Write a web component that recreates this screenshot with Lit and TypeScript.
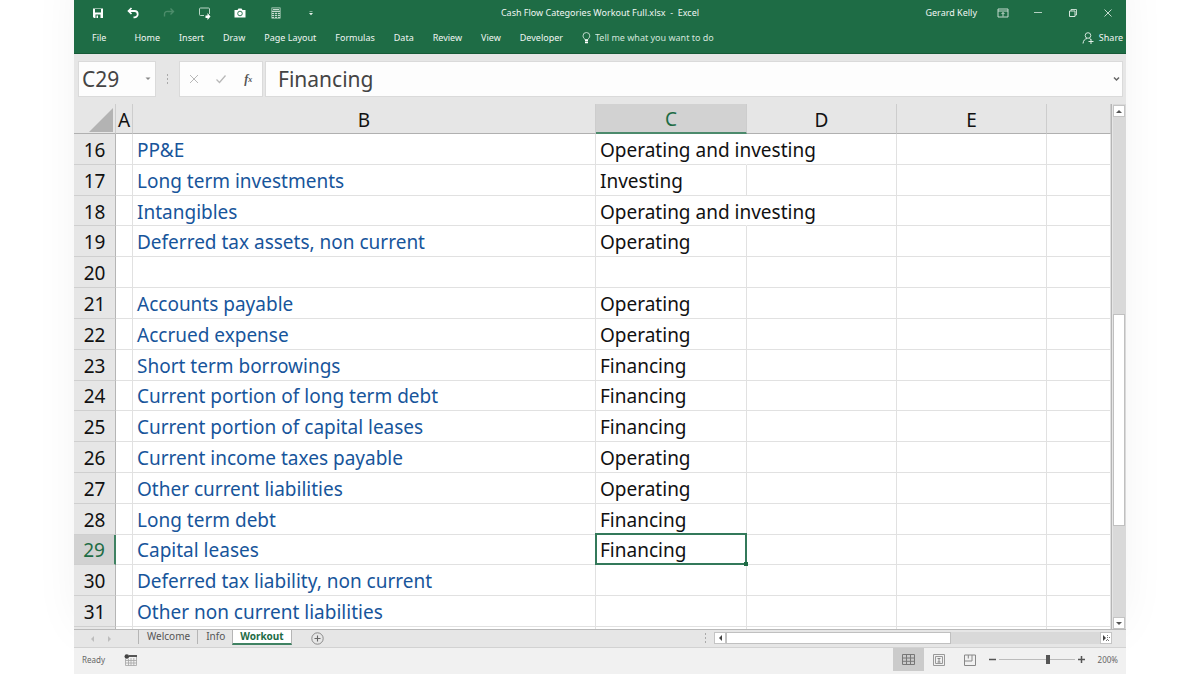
import { LitElement, html, svg, css, nothing } from "lit";
import { customElement, state } from "lit/decorators.js";
import { classMap } from "lit/directives/class-map.js";

interface Row {
  n: number;
  label: string;
  category: string;
}

const ROWS: Row[] = [
  { n: 16, label: "PP&E", category: "Operating and investing" },
  { n: 17, label: "Long term investments", category: "Investing" },
  { n: 18, label: "Intangibles", category: "Operating and investing" },
  { n: 19, label: "Deferred tax assets, non current", category: "Operating" },
  { n: 20, label: "", category: "" },
  { n: 21, label: "Accounts payable", category: "Operating" },
  { n: 22, label: "Accrued expense", category: "Operating" },
  { n: 23, label: "Short term borrowings", category: "Financing" },
  { n: 24, label: "Current portion of long term debt", category: "Financing" },
  { n: 25, label: "Current portion of capital leases", category: "Financing" },
  { n: 26, label: "Current income taxes payable", category: "Operating" },
  { n: 27, label: "Other current liabilities", category: "Operating" },
  { n: 28, label: "Long term debt", category: "Financing" },
  { n: 29, label: "Capital leases", category: "Financing" },
  { n: 30, label: "Deferred tax liability, non current", category: "" },
  { n: 31, label: "Other non current liabilities", category: "" },
];

const COLUMNS = ["A", "B", "C", "D", "E", ""];

const MENU = ["File", "Home", "Insert", "Draw", "Page Layout", "Formulas", "Data", "Review", "View", "Developer"];

const icon = (body: unknown, w = 12, h = 12) =>
  html`<svg width=${w} height=${h} viewBox="0 0 ${w} ${h}" fill="none" aria-hidden="true">${body}</svg>`;

const ICONS = {
  save: icon(svg`<path d="M1 1.5h10v9.500H2L1 10z" fill="#fff"/><path d="M3 2h6v3.500H3z" fill="#1e6c45"/><path d="M3.500 7.500h5V11h-5z" fill="#1e6c45"/><path d="M4.500 8.500h1.500V11H4.500z" fill="#fff"/>`),
  undo: icon(svg`<path d="M4.500 1L1.500 4l3 3" stroke="#fff" stroke-width="1.700"/><path d="M2 4h5.500a3.200 3.200 0 0 1 0 6.400H6.500" stroke="#fff" stroke-width="1.800"/>`),
  redo: icon(svg`<path d="M7.500 1.500L10.500 4.500l-3 3M10.500 4.500H5a2.800 2.800 0 0 0-3.500 3v2" stroke="#4c8c6a" stroke-width="1.400"/>`),
  touch: icon(svg`<path d="M6 8.500H2.500a1 1 0 0 1-1-1V2a1 1 0 0 1 1-1h8a1 1 0 0 1 1 1v5" stroke="#b9d6c6"/><path d="M7.500 8.500h2V6l3 3.500-3 3.500v-2h-2z" fill="#fff"/>`, 13, 13),
  camera: icon(svg`<path d="M.500 3h3l1-1.500h3L8.500 3h3v7.500H.500z" fill="#fff"/><circle cx="6" cy="6.500" r="2.300" stroke="#1e6c45" stroke-width=".9"/>`),
  calc: icon(svg`<path d="M1.500.500h9v11h-9z" fill="#c5dccf"/><path d="M2.500 1.500h7v2h-7z" stroke="#1e6c45" stroke-width=".7"/><path d="M2 5.500h8M2 7.500h8M2 9.500h8M4.500 5v6M7.500 5v6" stroke="#1e6c45" stroke-width=".8"/>`),
  more: icon(svg`<path d="M4.500 4.500h3" stroke="#a9cbb9" stroke-width=".7"/><path d="M4 6h4L6 8.200z" fill="#e6f0ea"/>`),
  display: icon(svg`<path d="M1 2h10v8H1zM1 4h10M6 9.500v-4M4.500 7L6 5.500 7.500 7" stroke="#d6e6dd" stroke-width=".9"/>`),
  minimise: icon(svg`<path d="M2 5.500h8" stroke="#b5d0c2"/>`),
  restore: icon(svg`<path d="M2.500 4h5.500v5.500H2.500z" stroke="#d6e6dd"/><path d="M4 4V2.500h5.500V8H8" stroke="#d6e6dd" stroke-width=".9"/>`),
  close: icon(svg`<path d="M2.500 2.500l7 7M9.500 2.500l-7 7" stroke="#d6e6dd" stroke-width=".9"/>`),
  bulb: icon(svg`<path d="M2.800 7.500C2.500 6.300 1 5.700 1 3.900a3.400 3.400 0 0 1 6.800 0c0 1.800-1.500 2.400-1.800 3.600z" stroke="#cfe2d8" stroke-width=".9"/><path d="M3 8.500h3M3 10.500h3" stroke="#fff" stroke-width="1.500"/>`, 9, 12),
  share: icon(svg`<circle cx="6" cy="3.500" r="2.800" stroke="#e3efe9" stroke-width=".9"/><path d="M1 11.500C1.300 8.500 3 6.800 5 6.500M7.500 6.500l1.500 1M6.500 9.500h5M9 7v5" stroke="#e3efe9"/>`, 12, 13),
  cancel: icon(svg`<path d="M2 2l8 8M10 2l-8 8" stroke="#b8b8b8"/>`),
  accept: icon(svg`<path d="M1.500 6.500l3 3 6-7" stroke="#b8b8b8" stroke-width="1.300"/>`),
  caret: icon(svg`<path d="M.500 1.500h5L3 4z" fill="#888"/>`, 6, 6),
  chevron: icon(svg`<path d="M1 1.500l2.500 2.500L6 1.500" stroke="#666" stroke-width="1.500"/>`, 7, 6),
  up: icon(svg`<path d="M0 4h6L3 1z" fill="#555"/>`, 6, 5),
  down: icon(svg`<path d="M0 1h6L3 4z" fill="#555"/>`, 6, 5),
  left: icon(svg`<path d="M4 0v6L1 3z" fill="#444"/>`, 5, 6),
  right: icon(svg`<path d="M1 0v6l3-3z" fill="#444"/><path d="M5.500 0v6M4 5.500h4M7.500 2v2" stroke="#777" stroke-dasharray="1 1"/>`, 8, 6),
  prev: icon(svg`<path d="M4 0v6L1 3z" fill="#bdbdbd"/>`, 5, 6),
  next: icon(svg`<path d="M1 0v6l3-3z" fill="#bdbdbd"/>`, 5, 6),
  add: icon(svg`<circle cx="6.500" cy="6.500" r="5.700" stroke="#808080" stroke-width=".9"/><path d="M3.500 6.500h6M6.500 3.500v6" stroke="#666" stroke-width="1.100"/>`, 13, 13),
  macro: icon(svg`<circle cx="2.800" cy="2.500" r="2.300" fill="#444"/><path d="M5 2h8" stroke="#555" stroke-width="2"/><path d="M1.500 5v6.500h11V3M1.500 6.500h11M1.500 9h11M4.500 5v6.500M7 4v7.500M9.800 4v7.500" stroke="#a5a5a5" stroke-width=".8"/>`, 13, 12),
  normal: icon(svg`<path d="M.500 1.500h12v10H.500zM.500 5h12M.500 8.300h12M4.500 1.500v10M8.500 1.500v10" stroke="#777"/>`, 13, 13),
  pageLayout: icon(svg`<path d="M.500.500h11v11H.500zM2.500 2.500h7v7h-7z" stroke="#999"/><path d="M4.500 4.500h3M6 4.500v4M4.500 8h3" stroke="#888"/>`),
  pageBreak: icon(svg`<path d="M.500 1h11v10.500H.500zM.500 7h7.500V1M4.300 1v3.500" stroke="#888"/>`),
  minus: icon(svg`<path d="M0 3.500h7" stroke="#555" stroke-width="1.500"/>`, 7, 7),
  plus: icon(svg`<path d="M0 3.500h7M3.500 0v7" stroke="#555" stroke-width="1.500"/>`, 7, 7),
};

@customElement("app-root")
export class AppRoot extends LitElement {
  @state() private selected = 29;
  @state() private sheet = "Workout";

  static styles = css`
    :host {
      display: block;
      box-sizing: border-box;
      height: 100vh;
      padding: 0 74px 1px;
      overflow: hidden;
      background: #fff;
      font-family: "Noto Sans", "Open Sans", sans-serif;
      --green: #1e6c45;
      --chrome: #e6e6e6;
      --line: #e1e1e1;
    }
    * { box-sizing: border-box; }
    button, input {
      font: inherit;
      color: inherit;
      background: none;
      border: 0;
      padding: 0;
      margin: 0;
      min-width: 0;
      outline: none;
    }
    button {
      display: flex;
      align-items: center;
      justify-content: center;
      white-space: nowrap;
    }
    svg { display: block; flex: none; }

    .window {
      display: flex;
      flex-direction: column;
      height: 100%;
      background: var(--chrome);
      box-shadow: 0 -40px 50px -10px rgba(0, 0, 0, 0.07);
    }
    .top {
      flex: none;
      background: var(--green);
      border-bottom: 1px solid #165a37;
      color: #f0f6f3;
      font-size: 9px;
      line-height: 12px;
    }
    .titlebar {
      display: grid;
      grid-template-columns: 1fr auto 1fr;
      align-items: center;
      height: 26px;
    }
    .title { white-space: pre; }
    .quick { display: flex; width: 249px; margin-left: 6px; }
    .quick button, .controls button { flex: 1; height: 24px; }
    .account { display: flex; align-items: center; justify-content: flex-end; gap: 8px; }
    .controls { display: flex; width: 141px; }
    .ribbon {
      display: flex;
      align-items: center;
      gap: 19px;
      height: 27px;
      padding: 0 3px 3px 18px;
    }
    .ribbon .file { margin-right: 9px; }
    .tell { display: flex; align-items: center; gap: 4px; flex: 1; color: #d3e4db; }
    .tell input { flex: 1; }
    .tell input::placeholder { color: #d3e4db; opacity: 1; }
    .share { gap: 5px; }

    .formula {
      flex: none;
      display: flex;
      align-items: stretch;
      height: 50px;
      padding: 7px 3px;
      color: #444;
      font-size: 21px;
      line-height: 28px;
    }
    .box { display: flex; align-items: center; background: #fdfdfd; border: 1px solid #dadada; }
    .namebox { width: 78px; margin-left: 1px; padding: 0 4px 0 3px; }
    .namebox input { flex: 1; }
    .grip { display: flex; align-items: center; justify-content: center; width: 23px; }
    .actions { width: 84px; }
    .actions button { flex: 1; height: 100%; }
    .fx { font: italic bold 12px "Liberation Serif", serif; color: #555; }
    .fx small { font-size: 8px; }
    .entry { flex: 1; margin-left: 2px; padding: 0 2px 0 12px; }
    .entry input { flex: 1; }

    .body { flex: 1; display: flex; min-height: 0; }
    .sheet { flex: 1; min-width: 0; overflow: hidden; border-right: 1px solid #b5b5b5; margin-right: 1px; }
    table {
      width: 100%;
      height: 100%;
      table-layout: fixed;
      border-collapse: separate;
      border-spacing: 0;
      font-size: 19px;
      line-height: 24px;
      color: #111;
    }
    th, td {
      padding: 2px 0 0;
      font-weight: 400;
      white-space: nowrap;
      border-right: 1px solid var(--line);
      border-bottom: 1px solid var(--line);
    }
    td { background: #fff; padding-left: 4px; text-align: left; }
    td.spill { border-right-color: transparent; overflow: visible; position: relative; z-index: 1; }
    td.label { color: #17559b; }
    thead tr { height: 30px; }
    thead th {
      background: var(--chrome);
      border-right-color: #cdcdcd;
      border-bottom-color: #b0b0b0;
    }
    thead th.current { background: #d2d2d2; color: var(--green); border-bottom: 2px solid #4c8a6c; }
    tbody th { background: var(--chrome); border-right-color: #b5b5b5; border-bottom-color: #cfcfcf; }
    tbody th.current { background: #d2d2d2; color: var(--green); border-right: 2px solid #3f8262; }
    .rownum { width: 42px; }
    .a { width: 17px; }
    .b { width: 463px; }
    .c { width: 151px; }
    .d, .e { width: 150px; }
    .corner { vertical-align: bottom; }
    .corner svg { margin: 0 2px 1px auto; }
    tr.rest { height: 2px; line-height: 0; }
    tr.rest th, tr.rest td { border-bottom: 0; }
    td.selected { position: relative; }
    td.selected::before {
      content: "";
      position: absolute;
      inset: -2px -1px -1px -1px;
      border: 2px solid #33795a;
    }
    td.selected::after {
      content: "";
      position: absolute;
      right: -2px;
      bottom: -2px;
      width: 4px;
      height: 4px;
      background: var(--green);
    }

    .vscroll { flex: none; display: flex; flex-direction: column; width: 13px; background: #d9d9d9; padding-top: 1px; }
    .arrow { flex: none; background: #fff; border: 1px solid #c4c4c4; width: 12px; height: 12px; }
    .thumb { background: #fff; border: 1px solid #c0c0c0; }
    .vscroll .before { flex: 199; }
    .vscroll .thumb { flex: 211; width: 12px; }
    .vscroll .after { flex: 92; }

    .tabs {
      flex: none;
      display: flex;
      height: 18px;
      border-top: 1px solid #b9b9b9;
      font-size: 10px;
      line-height: 12px;
      color: #555;
    }
    .nav { display: flex; gap: 6px; padding-left: 13px; width: 64px; }
    .nav button { width: 11px; }
    .tab { height: 14px; padding: 0 7px 2px 8px; border-left: 1px solid #b5b5b5; }
    .tab.active {
      background: #fff;
      color: var(--green);
      font-weight: 700;
      height: 15px;
      padding: 0 7px 1px;
      border-right: 1px solid #b5b5b5;
      border-bottom: 2px solid #3f8262;
    }
    .new { margin-left: 19px; }
    .hscroll { margin-left: auto; display: flex; align-items: center; width: 429px; padding: 0 14px 1px 0; }
    .hscroll .grip { width: 17px; }
    .track { flex: 1; display: flex; align-items: center; height: 12px; background: #d9d9d9; }
    .hscroll .thumb { flex: 224; height: 12px; }
    .hscroll .after { flex: 150; }

    .status {
      flex: none;
      display: flex;
      align-items: center;
      height: 27px;
      padding: 0 8px 3px;
      background: #f1f1f1;
      border-top: 1px solid #d2d2d2;
      font-size: 8px;
      line-height: 12px;
      color: #666;
    }
    .macro { margin-left: 19px; }
    .views { display: flex; margin-left: auto; align-self: stretch; }
    .views button { width: 31px; height: 23px; }
    .views .active { background: #cbcbcb; }
    .zoom { display: flex; align-items: center; gap: 3px; margin-left: 3px; }
    .zoom output { margin-left: 10px; }
    input[type="range"] { appearance: none; width: 76px; height: 12px; background: linear-gradient(#bcbcbc, #bcbcbc) center / 100% 1px no-repeat; }
    input[type="range"]::-webkit-slider-thumb { appearance: none; width: 4px; height: 9px; background: #555; }
  `;

  private renderRow(row: Row) {
    const current = row.n === this.selected;
    return html`<tr>
      <th scope="row" class=${classMap({ current })}>${row.n}</th>
      <td></td>
      <td class="label">${row.label}</td>
      <td
        class=${classMap({ selected: current, spill: row.category.length > 12 })}
        @click=${() => (this.selected = row.n)}
      >${row.category}</td>
      <td></td><td></td><td></td>
    </tr>`;
  }

  private renderTab(name: string) {
    return html`<button
      class=${classMap({ tab: true, active: this.sheet === name })}
      @click=${() => (this.sheet = name)}
    >${name}</button>`;
  }

  private grip() {
    return html`<span class="grip">${icon(svg`<path d="M1.500 1v2M1.500 5v2M1.500 9v2" stroke="#aaa"/>`, 3, 12)}</span>`;
  }

  render() {
    const value = ROWS.find((r) => r.n === this.selected)?.category ?? "";
    return html`<div class="window">
      <header class="top">
        <div class="titlebar">
          <div class="quick">
            <button aria-label="Save">${ICONS.save}</button>
            <button aria-label="Undo">${ICONS.undo}</button>
            <button aria-label="Redo">${ICONS.redo}</button>
            <button aria-label="Touch mode">${ICONS.touch}</button>
            <button aria-label="Camera">${ICONS.camera}</button>
            <button aria-label="Calculator">${ICONS.calc}</button>
            <button aria-label="Customise toolbar">${ICONS.more}</button>
          </div>
          <span class="title">Cash Flow Categories Workout Full.xlsx  -  Excel</span>
          <div class="account">
            <span>Gerard Kelly</span>
            <div class="controls">
              <button aria-label="Ribbon display options">${ICONS.display}</button>
              <button aria-label="Minimise">${ICONS.minimise}</button>
              <button aria-label="Restore">${ICONS.restore}</button>
              <button aria-label="Close">${ICONS.close}</button>
            </div>
          </div>
        </div>
        <nav class="ribbon">
          ${MENU.map((m) => html`<button class=${m === "File" ? "file" : nothing}>${m}</button>`)}
          <label class="tell">${ICONS.bulb}<input aria-label="Tell me what you want to do" placeholder="Tell me what you want to do" /></label>
          <button class="share">${ICONS.share}Share</button>
        </nav>
      </header>

      <div class="formula">
        <div class="box namebox">
          <input aria-label="Name box" .value=${"C" + this.selected} />
          <button aria-label="Named ranges">${ICONS.caret}</button>
        </div>
        ${this.grip()}
        <div class="box actions">
          <button aria-label="Cancel">${ICONS.cancel}</button>
          <button aria-label="Enter">${ICONS.accept}</button>
          <button class="fx" aria-label="Insert function">f<small>x</small></button>
        </div>
        <div class="box entry">
          <input aria-label="Formula bar" .value=${value} />
          <button aria-label="Expand formula bar">${ICONS.chevron}</button>
        </div>
      </div>

      <div class="body">
        <div class="sheet">
          <table>
            <colgroup>
              <col class="rownum" /><col class="a" /><col class="b" /><col class="c" /><col class="d" /><col class="e" /><col />
            </colgroup>
            <thead>
              <tr>
                <th class="corner">${icon(svg`<path d="M24 0v24H0z" fill="#b3b3b3"/>`, 24, 24)}</th>
                ${COLUMNS.map((c) => html`<th scope="col" class=${classMap({ current: c === "C" })}>${c}</th>`)}
              </tr>
            </thead>
            <tbody>
              ${ROWS.map((r) => this.renderRow(r))}
              <tr class="rest"><th></th><td></td><td></td><td></td><td></td><td></td><td></td></tr>
            </tbody>
          </table>
        </div>
        <div class="vscroll">
          <button class="arrow" aria-label="Scroll up">${ICONS.up}</button>
          <div class="before"></div>
          <div class="thumb"></div>
          <div class="after"></div>
          <button class="arrow" aria-label="Scroll down">${ICONS.down}</button>
        </div>
      </div>

      <div class="tabs">
        <div class="nav">
          <button aria-label="Previous sheet">${ICONS.prev}</button>
          <button aria-label="Next sheet">${ICONS.next}</button>
        </div>
        ${["Welcome", "Info", "Workout"].map((t) => this.renderTab(t))}
        <button class="new" aria-label="New sheet">${ICONS.add}</button>
        <div class="hscroll">
          ${this.grip()}
          <button class="arrow" aria-label="Scroll left">${ICONS.left}</button>
          <div class="track"><div class="thumb"></div><div class="after"></div></div>
          <button class="arrow" aria-label="Scroll right">${ICONS.right}</button>
        </div>
      </div>

      <footer class="status">
        <span>Ready</span>
        <button class="macro" aria-label="Record macro">${ICONS.macro}</button>
        <div class="views">
          <button class="active" aria-label="Normal view">${ICONS.normal}</button>
          <button aria-label="Page layout view">${ICONS.pageLayout}</button>
          <button aria-label="Page break preview">${ICONS.pageBreak}</button>
        </div>
        <div class="zoom">
          <button aria-label="Zoom out">${ICONS.minus}</button>
          <input type="range" aria-label="Zoom" min="0" max="100" value="66" />
          <button aria-label="Zoom in">${ICONS.plus}</button>
          <output>200%</output>
        </div>
      </footer>
    </div>`;
  }
}
